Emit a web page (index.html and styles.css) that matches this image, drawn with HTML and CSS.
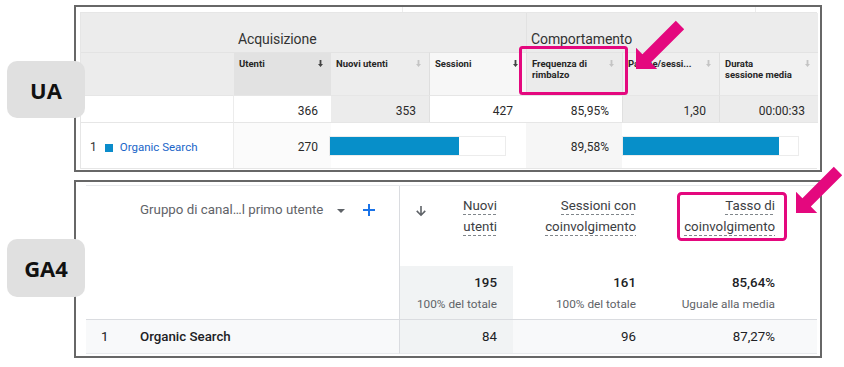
FILE: index.html
```html
<!DOCTYPE html>
<html lang="it">
<head>
<meta charset="utf-8">
<title>UA vs GA4</title>
<link rel="stylesheet" href="styles.css">
</head>
<body>
<div class="canvas">
  <section class="panel panel-ua">
    <div class="tag tag-ua">UA</div>
    <div class="ua-strip"><span class="tick tick-1"></span><span class="tick tick-2"></span></div>
    <div class="ua-table">
      <div class="c ua-dimtop"></div>
      <div class="c ua-grp">Acquisizione</div>
      <div class="c ua-grp ua-grp2">Comportamento</div>

      <div class="c ua-dimsub"></div>
      <div class="c th th-a"><span>Utenti</span><svg class="srt on" width="5" height="7" viewBox="0 0 5 7"><path d="M1.6 0h1.8v4h1.6L2.5 7 0 4h1.6z"/></svg></div>
      <div class="c th th-b"><span>Nuovi utenti</span><svg class="srt" width="5" height="7" viewBox="0 0 5 7"><path d="M1.6 0h1.8v4h1.6L2.5 7 0 4h1.6z"/></svg></div>
      <div class="c th th-c"><span>Sessioni</span><svg class="srt on" width="5" height="7" viewBox="0 0 5 7"><path d="M1.6 0h1.8v4h1.6L2.5 7 0 4h1.6z"/></svg></div>
      <div class="c th th-d"><span>Frequenza di<br>rimbalzo</span><svg class="srt" width="5" height="7" viewBox="0 0 5 7"><path d="M1.6 0h1.8v4h1.6L2.5 7 0 4h1.6z"/></svg></div>
      <div class="c th th-e"><span>Pagine/sessi...</span><svg class="srt" width="5" height="7" viewBox="0 0 5 7"><path d="M1.6 0h1.8v4h1.6L2.5 7 0 4h1.6z"/></svg></div>
      <div class="c th th-f"><span>Durata<br>sessione media</span><svg class="srt" width="5" height="7" viewBox="0 0 5 7"><path d="M1.6 0h1.8v4h1.6L2.5 7 0 4h1.6z"/></svg></div>

      <div class="c tot tot-dim"></div>
      <div class="c tot num">366</div>
      <div class="c tot num gray">353</div>
      <div class="c tot num lined">427</div>
      <div class="c tot num">85,95%</div>
      <div class="c tot num gray lined">1,30</div>
      <div class="c tot num gray lined">00:00:33</div>

      <div class="c row ua-dim"><span class="idx">1</span><span class="sq"></span><span class="lnk">Organic Search</span></div>
      <div class="c row num soft">270</div>
      <div class="c row barcell"><div class="bar bar-1"><div class="fill" style="width:73.5%"></div></div></div>
      <div class="c row num soft2">89,58%</div>
      <div class="c row barcell"><div class="bar bar-2"><div class="fill" style="width:89.2%"></div></div></div>
    </div>
  </section>

  <section class="panel panel-ga">
    <div class="tag tag-ga">GA4</div>
    <div class="ga-table">
      <div class="g gh-dim"><span class="gtxt">Gruppo di canal…l primo utente</span><span class="caret"></span><svg class="plus" width="12" height="12" viewBox="0 0 12 12"><path d="M6 0v12M0 6h12"/></svg></div>
      <div class="g gh gh-first"><svg class="down" width="10" height="11" viewBox="0 0 10 11"><path d="M4.2 0h1.6v7.2l2.9-2.9 1.1 1.1L5 10.2 0.2 5.4l1.1-1.1 2.9 2.9z"/></svg><span class="lbl"><span class="ln">Nuovi</span><span class="ln">utenti</span></span></div>
      <div class="g gh"><span class="lbl"><span class="ln">Sessioni con</span><span class="ln">coinvolgimento</span></span></div>
      <div class="g gh"><span class="lbl"><span class="ln">Tasso di</span><span class="ln">coinvolgimento</span></span></div>
      <div class="g gh-end"></div>

      <div class="g gt-dim"></div>
      <div class="g gt gt-first"><span class="v">195</span><span class="s">100% del totale</span></div>
      <div class="g gt"><span class="v">161</span><span class="s">100% del totale</span></div>
      <div class="g gt"><span class="v">85,64%</span><span class="s">Uguale alla media</span></div>
      <div class="g gt-end"></div>

      <div class="g gr-dim"><span class="gidx">1</span><span class="gname">Organic Search</span></div>
      <div class="g gr gr-first">84</div>
      <div class="g gr">96</div>
      <div class="g gr">87,27%</div>
      <div class="g gr-end"></div>
    </div>
  </section>

  <svg class="marks" width="844" height="367" viewBox="0 0 844 367">
    <rect x="520.5" y="47.5" width="106" height="46" rx="2"/>
    <rect x="678.5" y="193.5" width="107" height="46" rx="3"/>
    <polygon points="675.8,20.8 642.4,54.2 636,47.8 636,69 657.2,69 650.8,62.6 684.2,29.2"/>
    <polygon points="833.8,166.8 802.4,198.2 796,191.8 796,213 817.2,213 810.8,206.6 842.2,175.2"/>
  </svg>
</div>
</body>
</html>
```

FILE: styles.css
```css
html, body {
  margin: 0;
  background: #ffffff;
}

body {
  font-family: Roboto, "Liberation Sans", Arial, sans-serif;
  color: #222;
}

.canvas {
  position: relative;
  width: 844px;
  height: 367px;
  box-sizing: border-box;
  padding: 5px 22px 0 74px;
  display: flex;
  flex-direction: column;
  gap: 8px;
  overflow: hidden;
}

.panel {
  position: relative;
  box-sizing: border-box;
  border: 2px solid #676767;
  background: #fff;
}

.panel-ua {
  height: 167px;
  padding: 0 3px 0 4px;
}

.panel-ga {
  height: 178px;
  padding: 3px 3px 0 10px;
}

/* thin strip above UA table, with remnants of upper ui */
.ua-strip {
  height: 5px;
  display: flex;
}

.tick {
  width: 1px;
  height: 5px;
  background: #ececec;
}

.tick-1 {
  margin-left: 322px;
}

.tick-2 {
  margin-left: 352px;
}

/* labels */
.tag {
  position: absolute;
  left: -69px;
  width: 78px;
  border-radius: 10px;
  background: #e0e0e0;
  display: flex;
  align-items: center;
  justify-content: center;
  font-family: "Open Sans", "Noto Sans", sans-serif;
  font-weight: 700;
  font-size: 22px;
  color: #111;
  z-index: 2;
}

.tag-ua {
  top: 54px;
  height: 57px;
}

.tag-ga {
  top: 57px;
  height: 58px;
}

/* ---------- UA table ---------- */
.ua-table {
  display: grid;
  grid-template-columns: 153px 97px 98px 97px 96px 97px 99px;
  grid-template-rows: 39px 43px 27px 46px;
  border-top: 1px solid #e6e6e6;
  border-bottom: 1px solid #e6e6e6;
  border-left: 1px solid #e6e6e6;
  border-right: 1px solid #e6e6e6;
  width: 737px;
  box-sizing: border-box;
}

.c {
  box-sizing: border-box;
  min-width: 0;
}

.ua-dimtop {
  background: #ececec;
}

.ua-dimsub {
  background: #ececec;
  border-top: 1px solid #e3e3e3;
}

.ua-grp {
  grid-column: span 3;
  background: #ececec;
  font-size: 14px;
  color: #333;
  display: flex;
  align-items: flex-end;
  padding: 0 0 5px 4px;
  letter-spacing: -0.1px;
}

.ua-grp2 {
  border-left: 1px solid #e2e2e2;
}

.th {
  display: flex;
  justify-content: space-between;
  align-items: flex-start;
  padding: 6px 8px 0 5px;
  font-size: 9.5px;
  line-height: 10.5px;
  font-weight: 700;
  color: #262626;
  border-top: 1px solid #e3e3e3;
  white-space: nowrap;
}

.th-a { background: #e2e2e2; }
.th-b { background: #ededed; }
.th-c { background: #f7f7f7; border-left: 1px solid #dedede; }
.th-d { background: #ebebeb; border-left: 1px solid #e0e0e0; }
.th-e { background: #efefef; border-left: 1px solid #e0e0e0; }
.th-f { background: #f1f1f1; border-left: 1px solid #e0e0e0; }

.srt {
  flex: none;
  margin-top: 1px;
  fill: #c4c4c4;
}

.srt.on {
  fill: #444;
}

.num {
  display: flex;
  justify-content: flex-end;
  align-items: center;
  padding-right: 13px;
  font-size: 12px;
  color: #2a2a2a;
}

.tot {
  background: #fff;
  border-top: 1px solid #e6e6e6;
  padding-top: 4px;
}

.tot-dim {
  background: #fff;
  border-right: 1px solid #ececec;
}

.tot.gray {
  background: #ececec;
}

.tot.lined {
  border-left: 1px solid #e0e0e0;
}

.row {
  border-top: 1px solid #e6e6e6;
  background: #fff;
}

.ua-dim {
  display: flex;
  align-items: center;
  padding: 2px 0 0 9px;
  font-size: 11.5px;
  border-right: 1px solid #ececec;
}

.idx {
  color: #333;
  font-size: 12px;
}

.sq {
  width: 8px;
  height: 8px;
  background: #0b8ccb;
  margin: 2px 7px 0 8px;
}

.lnk {
  color: #2065c8;
}

.soft {
  background: #fbfbfb;
  padding-top: 2px;
}

.soft2 {
  background: #f6f6f6;
  padding-top: 2px;
}

.barcell {
  grid-column: span 2;
  padding-top: 13px;
}

.bar {
  height: 20px;
  box-sizing: border-box;
  border: 1px solid #ececec;
  background: #fff;
}

.bar-1 {
  width: 177px;
  margin-left: -2px;
}

.bar-2 {
  width: 177px;
}

.fill {
  height: 100%;
  background: #078fc9;
}

/* ---------- GA4 table ---------- */
.ga-table {
  display: grid;
  grid-template-columns: 314px 113px 139px 139px 26px;
  grid-template-rows: 80px 54px 34px;
  border-top: 1px solid #e8eaed;
  width: 731px;
  font-size: 13.3px;
  color: #202124;
}

.g {
  box-sizing: border-box;
  min-width: 0;
}

.gh-dim {
  border-right: 1px solid #dadce0;
  display: flex;
  align-items: flex-start;
  padding: 14px 0 0 54px;
  line-height: 20px;
  color: #5f6368;
}

.gtxt {
  white-space: nowrap;
}

.caret {
  width: 0;
  height: 0;
  border-left: 4px solid transparent;
  border-right: 4px solid transparent;
  border-top: 4px solid #5f6368;
  margin: 9px 0 0 14px;
}

.plus {
  margin: 4px 0 0 18px;
  stroke: #1a73e8;
  stroke-width: 2;
  fill: none;
}

.gh {
  display: flex;
  justify-content: flex-end;
  align-items: flex-start;
  padding: 12px 16px 0 16px;
  color: #3c4043;
}

.gh-first {
  justify-content: space-between;
}

.down {
  fill: #5f6368;
  margin-top: 8px;
}

.lbl {
  display: flex;
  flex-direction: column;
  align-items: flex-end;
  gap: 4px;
}

.ln {
  display: block;
  line-height: 16px;
  white-space: nowrap;
  background-image: linear-gradient(to right, #80868b 60%, transparent 60%);
  background-size: 5px 1px;
  background-repeat: repeat-x;
  background-position: left bottom;
  padding-bottom: 1px;
}

.gt-dim {
  border-right: 1px solid #dadce0;
  border-bottom: 1px solid #dadce0;
}

.gt {
  display: flex;
  flex-direction: column;
  align-items: flex-end;
  padding: 8px 16px 0 0;
  border-bottom: 1px solid #dadce0;
}

.gt-first {
  background: #f1f3f4;
}

.gt .v {
  line-height: 18px;
  font-weight: 500;
}

.gt .s {
  margin-top: 4px;
  line-height: 16px;
  font-size: 11.8px;
  color: #5f6368;
}

.gt-end {
  border-bottom: 1px solid #dadce0;
}

.gr-dim {
  border-right: 1px solid #dadce0;
  border-bottom: 1px solid #e8eaed;
  background: #f8f9fa;
  display: flex;
  align-items: center;
}

.gidx {
  width: 54px;
  padding-left: 15px;
  box-sizing: border-box;
}

.gname {
  font-weight: 500;
}

.gr {
  display: flex;
  justify-content: flex-end;
  align-items: center;
  padding-right: 16px;
  background: #f8f9fa;
  border-bottom: 1px solid #e8eaed;
}

.gr-first {
  background: #f1f3f4;
}

.gr-end {
  background: #f8f9fa;
  border-bottom: 1px solid #e8eaed;
}

/* highlights and arrows */
.marks {
  position: absolute;
  left: 0;
  top: 0;
  pointer-events: none;
  z-index: 3;
}

.marks rect {
  fill: none;
  stroke: #e4087e;
  stroke-width: 3;
}

.marks polygon {
  fill: #e4087e;
}
```
